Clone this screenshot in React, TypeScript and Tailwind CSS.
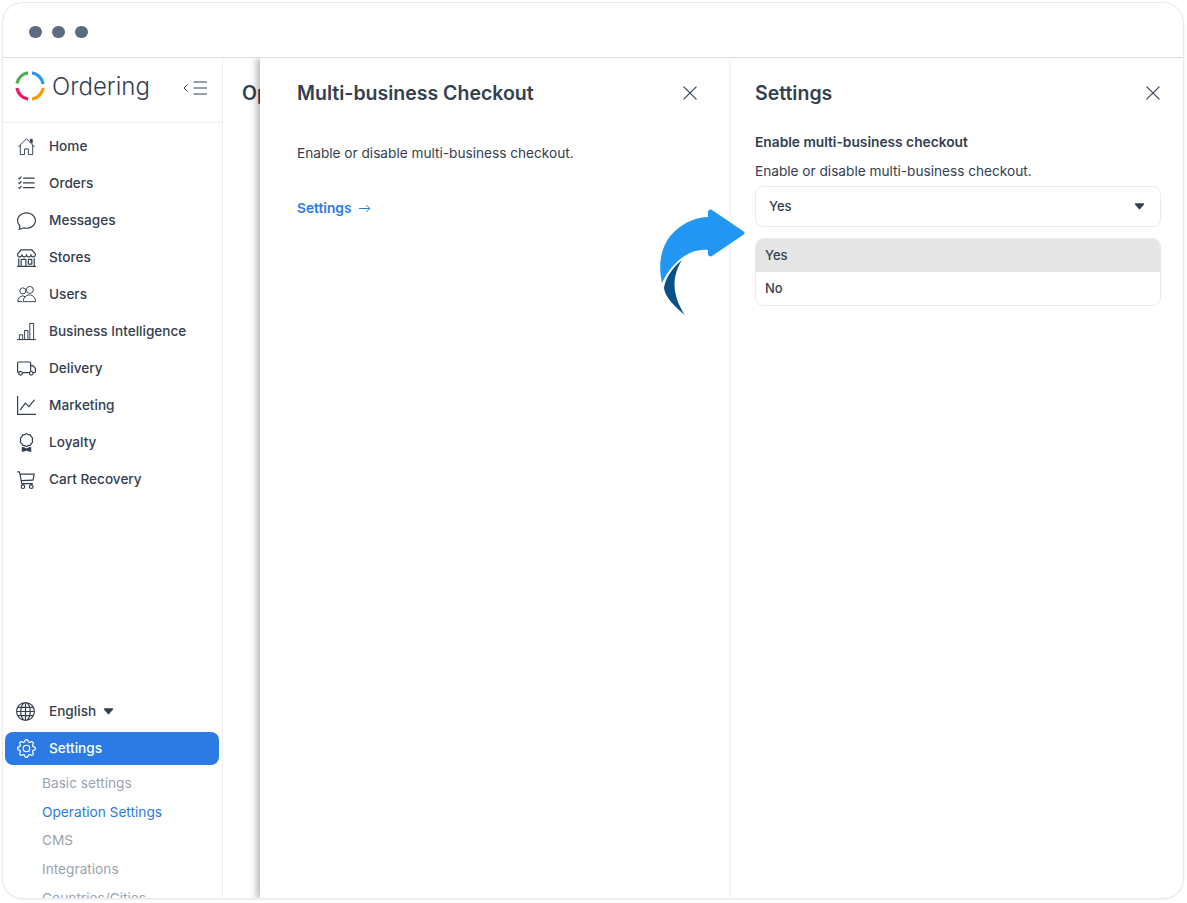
import {
  BsAward,
  BsArrowRight,
  BsCart3,
  BsCaretDownFill,
  BsChat,
  BsGear,
  BsGlobe,
  BsGraphUp,
  BsListCheck,
  BsShop,
  BsTruck,
  BsXLg,
} from "react-icons/bs";

function HomeIcon({ className }: { className?: string }) {
  return (
    <svg viewBox="0 0 20 20" fill="none" stroke="currentColor" strokeWidth="1" className={className}>
      <path d="M1.5 10.5L10 1.8L18.5 10.5" />
      <path d="M3.5 8.5V18.5H8V12.5H12V18.5H16.5V8.5" />
      <path d="M14 2.5H16V6.5L14 4.5Z" fill="currentColor" />
    </svg>
  );
}

function UsersIcon({ className }: { className?: string }) {
  return (
    <svg viewBox="0 0 20 20" fill="none" stroke="currentColor" strokeWidth="1" className={className}>
      <circle cx="6.2" cy="6.2" r="3.2" />
      <circle cx="13.5" cy="5.2" r="3.7" />
      <path d="M0.8 17.5C0.8 14 3 11.5 5.8 11.5C7 11.5 8 12 8.8 12.8" />
      <path d="M0.8 17.5H5.5M6.5 17.5C6.5 13.5 9.5 10.5 13.2 10.5C16.8 10.5 19.5 13.5 19.5 17.5Z" />
    </svg>
  );
}

function BarsIcon({ className }: { className?: string }) {
  return (
    <svg viewBox="0 0 20 20" fill="none" stroke="currentColor" strokeWidth="1" className={className}>
      <path d="M0 18.5H20" />
      <rect x="2.5" y="13.5" width="3.5" height="5" />
      <rect x="8" y="9" width="3.5" height="9.5" />
      <rect x="13.5" y="1.5" width="4" height="17" />
    </svg>
  );
}

const navItems = [
  { label: "Home", icon: HomeIcon },
  { label: "Orders", icon: BsListCheck },
  { label: "Messages", icon: BsChat },
  { label: "Stores", icon: BsShop },
  { label: "Users", icon: UsersIcon },
  { label: "Business Intelligence", icon: BarsIcon },
  { label: "Delivery", icon: BsTruck },
  { label: "Marketing", icon: BsGraphUp },
  { label: "Loyalty", icon: BsAward },
  { label: "Cart Recovery", icon: BsCart3 },
];

const subItems = ["Basic settings", "Operation Settings", "CMS", "Integrations", "Countries/Cities"];

function Logo() {
  return (
    <svg width="32" height="32" viewBox="0 0 32 32" fill="none" strokeWidth="3.2">
      <path d="M3 13.5A13.3 13.3 0 0 1 14 2.9" stroke="#4CAF50" />
      <path d="M18 2.9A13.3 13.3 0 0 1 29.1 14" stroke="#2196F3" />
      <path d="M29.1 18A13.3 13.3 0 0 1 18 29.1" stroke="#FF9800" />
      <path d="M14 29.1A13.3 13.3 0 0 1 3 18" stroke="#E91E63" />
    </svg>
  );
}

function CollapseIcon() {
  return (
    <svg width="24" height="14" viewBox="0 0 24 14" fill="none" stroke="#344050" strokeWidth="1">
      <path d="M10.5 1H24M10.5 7H24M10.5 13H24" />
      <path d="M4.5 3.5L1 7L4.5 10.5" />
    </svg>
  );
}

function CurvedArrow() {
  return (
    <svg width="95" height="115" viewBox="0 0 95 115" className="absolute left-[655px] top-[205px]">
      <path
        d="M53 7C53 5 55 4 57 5L88 26C90 27 90 29 88 30L57 51C55 52 53 51 53 49V45C36 43 18 55 7 78C3 60 5 40 20 26C30 17 42 12 53 12Z"
        fill="#2196F3"
      />
      <path d="M27 55C15 65 10 75 9 83C10 92 20 102 30 110C20 95 14 75 27 55Z" fill="#0A5087" />
    </svg>
  );
}

function PanelHeader({ title }: { title: string }) {
  return (
    <div className="flex items-center justify-between">
      <h2 className="text-[19.5px] font-semibold leading-[30px] text-[#344050]">{title}</h2>
      <BsXLg className="-mr-px h-[18px] w-[18px] text-[#344050]" />
    </div>
  );
}

export default function App() {
  return (
    <div className="relative h-[903px] w-[1187px] overflow-hidden bg-white font-['Inter',sans-serif]">
      <div className="absolute left-[3px] top-[3px] flex h-[895px] w-[1180px] flex-col overflow-hidden rounded-[20px] bg-white shadow-[0_0_0_1px_#e6ebf0,0_1px_3px_rgba(0,0,0,0.12)]">
        {/* window bar */}
        <div className="flex h-[55px] shrink-0 items-center gap-[10.5px] border-b border-[#d5dde5] pl-[26px] pt-[4px]">
          <span className="h-[12.5px] w-[12.5px] rounded-full bg-[#5b6b84]" />
          <span className="h-[12.5px] w-[12.5px] rounded-full bg-[#5b6b84]" />
          <span className="h-[12.5px] w-[12.5px] rounded-full bg-[#5b6b84]" />
        </div>

        <div className="flex min-h-0 flex-1 overflow-hidden">
          {/* sidebar */}
          <aside className="flex w-[220px] shrink-0 flex-col border-r border-[#eef1f4]">
            <div className="flex h-[65px] shrink-0 items-center border-b border-[#eef1f4] pb-[8px] pl-[11px] pr-[15px]">
              <Logo />
              <span className="ml-[6px] mt-[2px] text-[24px] font-light text-[#344050]">Ordering</span>
              <span className="ml-auto mt-[3px]">
                <CollapseIcon />
              </span>
            </div>
            <nav className="flex-1 pt-[5px]">
              {navItems.map(({ label, icon: Icon }) => (
                <div key={label} className="flex h-[37px] items-center pl-[14px]">
                  <Icon className="h-[19px] w-[19px] text-[#344050]" />
                  <span className="ml-[13px] text-[13.6px] font-medium text-[#344050]">{label}</span>
                </div>
              ))}
            </nav>
            <div className="h-[205px] shrink-0 overflow-hidden">
              <div className="flex h-[37px] items-center pl-[13px]">
                <BsGlobe className="h-[19px] w-[19px] text-[#344050]" />
                <span className="ml-[14px] text-[13.6px] font-medium text-[#344050]">English</span>
                <BsCaretDownFill className="ml-[6px] h-[13px] w-[13px] text-[#344050]" />
              </div>
              <div className="ml-[2px] mt-[2px] flex h-[33px] w-[214px] items-center rounded-lg bg-[#2c7be5] pl-[12px]">
                <BsGear className="h-[19px] w-[19px] text-white" />
                <span className="ml-[13px] text-[13.6px] font-medium text-white">Settings</span>
              </div>
              <ul className="pl-[39px] pt-[4px]">
                {subItems.map((item) => (
                  <li
                    key={item}
                    className={
                      item === "Operation Settings"
                        ? "flex h-[28.7px] items-center text-[13.7px] text-[#2c7be5]"
                        : "flex h-[28.7px] items-center text-[13.7px] text-[#9aa4b1]"
                    }
                  >
                    {item}
                  </li>
                ))}
              </ul>
            </div>
          </aside>

          {/* page behind the drawers */}
          <div className="w-[37px] shrink-0 overflow-hidden pl-[19px] pt-[20px]">
            <span className="text-[19.5px] font-semibold leading-[30px] text-[#344050]">Operation</span>
          </div>

          {/* first drawer */}
          <section className="w-[470px] shrink-0 border-r border-[#f0f2f4] pl-[37px] pr-[31px] pt-[20px] shadow-[-4px_0_6px_rgba(0,0,0,0.25)]">
            <PanelHeader title="Multi-business Checkout" />
            <p className="mt-[35px] text-[13.65px] leading-[21px] text-[#344050]">Enable or disable multi-business checkout.</p>
            <div className="mt-[34px] flex items-center gap-[6px] text-[13.75px] font-semibold leading-[21px] text-[#2c7be5]">
              Settings
              <BsArrowRight className="h-[13px] w-[13px]" />
            </div>
          </section>

          {/* second drawer */}
          <section className="min-w-0 flex-1 pl-[25px] pr-[22px] pt-[20px]">
            <PanelHeader title="Settings" />
            <h3 className="mt-[24px] text-[13.75px] font-semibold leading-[20px] text-[#344050]">Enable multi-business checkout</h3>
            <p className="mt-[9px] text-[13.65px] leading-[21px] text-[#344050]">Enable or disable multi-business checkout.</p>
            <div className="mt-[4px] flex h-[41px] items-center justify-between rounded-lg border border-[#e9ecef] pl-[13px] pr-[14px] text-[13px] font-medium text-[#344050]">
              Yes
              <BsCaretDownFill className="h-[13px] w-[13px]" />
            </div>
            <div className="mt-[11px] overflow-hidden rounded-lg border border-[#e9ecef] text-[13px] font-medium text-[#344050]">
              <div className="flex h-[33px] items-center bg-[#e5e5e5] pl-[9px]">Yes</div>
              <div className="flex h-[33px] items-center pl-[9px]">No</div>
            </div>
          </section>
        </div>
      </div>
      <CurvedArrow />
    </div>
  );
}
